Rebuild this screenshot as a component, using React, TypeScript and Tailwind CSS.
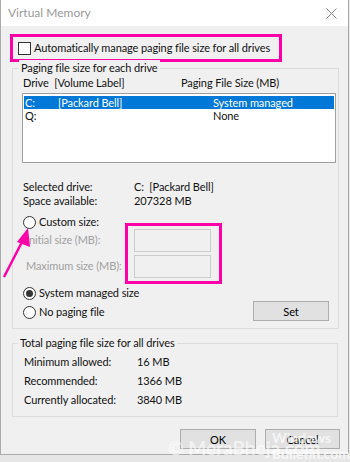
import React from 'react';

const font = { fontFamily: '"Segoe UI", Lato, "Noto Sans", sans-serif' };

const Radio = ({ checked }: { checked?: boolean }) => (
  <span className="w-[13px] h-[13px] rounded-full border border-[#333] bg-white flex items-center justify-center shrink-0">
    {checked && <span className="w-[7px] h-[7px] rounded-full bg-[#333]" />}
  </span>
);

const WinButton = ({ label, w }: { label: string; w: string }) => (
  <button className={`${w} h-[20px] bg-[#e1e1e1] border border-[#adadad] leading-none text-black flex items-center justify-center`}>
    {label}
  </button>
);

export default function App() {
  return (
    <div className="w-[350px] h-[462px] bg-[#e6e6e6] relative overflow-hidden text-[#111] text-[11px] tracking-[-0.1px] whitespace-nowrap" style={font}>
      {/* window */}
      <div className="w-[349px] h-[455px] bg-[#f0f0f0] border-l border-r border-b border-[#aaaaaa] flex flex-col">
        {/* title bar */}
        <div className="h-[26px] bg-white flex items-center justify-between pl-[7px] pr-[11px] shrink-0">
          <span className="text-[12px] text-[#999999] tracking-normal">Virtual Memory</span>
          <svg width="11" height="11" viewBox="0 0 11 11" className="text-[#888]">
            <path d="M0.5 0.5 L10.5 10.5 M10.5 0.5 L0.5 10.5" stroke="currentColor" strokeWidth="1" />
          </svg>
        </div>

        {/* auto manage row, highlighted */}
        <div className="mt-[8px] ml-[9px] w-[272px] h-[28px] border-[3px] border-[#ff00a8] flex items-center pl-[5px] gap-[3px]">
          <span className="w-[13px] h-[13px] border border-[#333] bg-white shrink-0" />
          <span>Automatically manage paging file size for all drives</span>
        </div>

        {/* paging file size for each drive */}
        <div className="mt-[6px] ml-[11px] w-[327px] border border-[#dcdcdc] relative pl-[9px] pr-[1px] pb-[7px]">
          <span className="absolute -top-[9px] left-[6px] px-[2px] bg-[#f0f0f0] leading-[16px]">Paging file size for each drive</span>
          <div className="mt-[6px] h-[16px] flex items-center">
            <span className="w-[159px] pl-[1px] whitespace-pre">Drive  [Volume Label]</span>
            <span>Paging File Size (MB)</span>
          </div>
          <div className="mt-[2px] w-[314px] h-[70px] bg-white border border-[#a0a0a0] pt-[2px] px-[1px]">
            <div className="h-[13px] bg-[#0078d7] text-white flex items-center leading-none">
              <span className="w-[34px] pl-[1px]">C:</span>
              <span className="w-[155px]">[Packard Bell]</span>
              <span>System managed</span>
            </div>
            <div className="h-[13px] flex items-center leading-none">
              <span className="w-[189px] pl-[1px]">Q:</span>
              <span>None</span>
            </div>
          </div>

          <div className="mt-[17px] leading-[14px]">
            <div className="flex"><span className="w-[112px] pl-[1px]">Selected drive:</span><span className="whitespace-pre">C:  [Packard Bell]</span></div>
            <div className="flex"><span className="w-[112px] pl-[1px]">Space available:</span><span>207328 MB</span></div>
          </div>

          <div className="mt-[8px] h-[13px] flex items-center gap-[3px] pl-[1px]">
            <Radio />
            <span>Custom size:</span>
          </div>
          <div className="flex flex-col gap-[3px] text-[#a0a0a0]">
            <div className="flex items-center h-[23px]">
              <span className="w-[112px] pl-[4px]">Initial size (MB):</span>
              <span className="w-[77px] h-[23px] border border-[#cccccc] bg-[#f0f0f0]" />
            </div>
            <div className="flex items-center h-[23px]">
              <span className="w-[112px] pl-[4px]">Maximum size (MB):</span>
              <span className="w-[77px] h-[23px] border border-[#cccccc] bg-[#f0f0f0]" />
            </div>
          </div>

          <div className="mt-[8px] flex justify-between items-start pr-[8px]">
            <div className="flex flex-col gap-[5px] pl-[1px]">
              <div className="h-[14px] flex items-center gap-[3px]"><Radio checked /><span>System managed size</span></div>
              <div className="h-[14px] flex items-center gap-[3px]"><Radio /><span>No paging file</span></div>
            </div>
            <div className="mt-[15px]"><WinButton label="Set" w="w-[76px]" /></div>
          </div>
        </div>

        {/* totals */}
        <div className="mt-[14px] ml-[11px] w-[326px] border border-[#dcdcdc] relative pl-[11px] pt-[9px] pb-[6px]">
          <span className="absolute -top-[9px] left-[5px] px-[2px] bg-[#f0f0f0] leading-[16px]">Total paging file size for all drives</span>
          <div className="h-[19px] flex items-center"><span className="w-[113px]">Minimum allowed:</span><span>16 MB</span></div>
          <div className="h-[19px] flex items-center"><span className="w-[113px]">Recommended:</span><span>1366 MB</span></div>
          <div className="h-[19px] flex items-center"><span className="w-[113px]">Currently allocated:</span><span>3840 MB</span></div>
        </div>

        <div className="mt-[12px] flex justify-end gap-[9px] pr-[8px]">
          <WinButton label="OK" w="w-[76px]" />
          <WinButton label="Cancel" w="w-[75px]" />
        </div>
      </div>

      {/* annotation box around size inputs */}
      <div className="absolute left-[125px] top-[223px] w-[97px] h-[61px] border-[3px] border-[#ff00a8]" />

      {/* annotation arrow */}
      <svg className="absolute left-0 top-0" width="350" height="462" viewBox="0 0 350 462">
        <line x1="4" y1="277" x2="23" y2="240" stroke="#ff00a8" strokeWidth="2.5" />
        <polygon points="28,228 17,242 30,247" fill="#ff00a8" />
      </svg>

      {/* watermarks */}
      <div className="absolute left-[168px] top-[438px] text-[19px] font-bold text-white/60 leading-none tracking-normal">© MeraBheja.com</div>
      <div className="absolute left-[272px] top-[431px] text-[14px] font-bold text-white/70 leading-none tracking-normal">Windows</div>
      <div className="absolute left-[272px] top-[447px] text-[14px] font-bold text-white/70 leading-none tracking-normal">Bulletin.com</div>
    </div>
  );
}
